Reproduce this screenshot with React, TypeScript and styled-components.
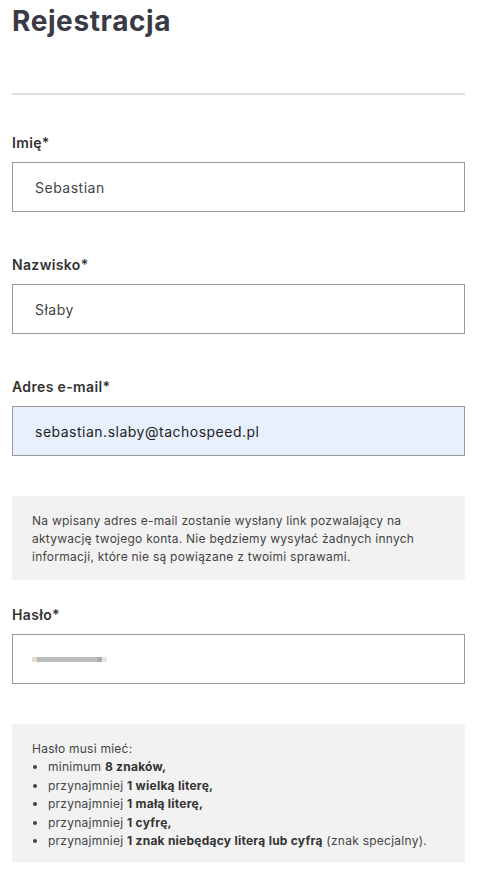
import React from 'react';
import styled, { createGlobalStyle } from 'styled-components';

const GlobalStyle = createGlobalStyle`
  * {
    box-sizing: border-box;
  }
  body {
    margin: 0;
    background: #fff;
    font-family: Inter, 'Noto Sans', sans-serif;
    color: #444;
  }
`;

const Page = styled.div`
  padding: 0 17px 0 12px;
`;

const Title = styled.h1`
  margin: 0;
  padding-top: 2px;
  font-size: 28px;
  line-height: 38px;
  font-weight: 700;
  letter-spacing: 0.6px;
  color: #3a3a45;
`;

const Divider = styled.hr`
  margin: 53px 0 0;
  border: none;
  height: 2px;
  background: #dedede;
`;

const Field = styled.div<{ $top: number }>`
  margin-top: ${({ $top }) => $top}px;
`;

const Label = styled.label`
  display: block;
  font-size: 14px;
  line-height: 20px;
  font-weight: 600;
  letter-spacing: 0.35px;
  color: #333;
  margin-bottom: 9px;
`;

const Input = styled.div<{ $autofill?: boolean }>`
  height: 50px;
  display: flex;
  align-items: center;
  padding: 0 22px;
  border: 1px solid #999;
  background: ${({ $autofill }) => ($autofill ? '#e8f0fe' : '#fff')};
  font-size: 14px;
  letter-spacing: 0.5px;
  color: ${({ $autofill }) => ($autofill ? '#222' : '#444')};
`;

const MaskedValue = styled.span`
  display: block;
  width: 75px;
  height: 5px;
  margin-left: -3px;
  background: linear-gradient(90deg, #e6dcd2 0 5px, #bbb 5px 65px, #aaa 65px 70px, #dde8ec 70px);
`;

const Note = styled.div<{ $top: number }>`
  margin-top: ${({ $top }) => $top}px;
  background: #f2f2f2;
  padding: 16px 20px 14px;
  font-size: 12px;
  line-height: 18px;
  letter-spacing: 0.25px;
  color: #444;
`;

const RulesNote = styled(Note)`
  padding-bottom: 11px;
`;

const RuleList = styled.ul`
  margin: 0;
  padding-left: 16px;
`;

const Rule = styled.li`
  line-height: 18.6px;
  b {
    font-weight: 700;
    color: #333;
  }
`;

export default function App() {
  return (
    <Page>
      <GlobalStyle />
      <Title>Rejestracja</Title>
      <Divider />
      <Field $top={38}>
        <Label>Imię*</Label>
        <Input>Sebastian</Input>
      </Field>
      <Field $top={43}>
        <Label>Nazwisko*</Label>
        <Input>Słaby</Input>
      </Field>
      <Field $top={43}>
        <Label>Adres e-mail*</Label>
        <Input $autofill>sebastian.slaby@tachospeed.pl</Input>
      </Field>
      <Note $top={40}>
        Na wpisany adres e-mail zostanie wysłany link pozwalający na aktywację twojego konta. Nie będziemy
        wysyłać żadnych innych informacji, które nie są powiązane z twoimi sprawami.
      </Note>
      <Field $top={25}>
        <Label>Hasło*</Label>
        <Input>
          <MaskedValue />
        </Input>
      </Field>
      <RulesNote $top={40}>
        <div>Hasło musi mieć:</div>
        <RuleList>
          <Rule>
            minimum <b>8 znaków,</b>
          </Rule>
          <Rule>
            przynajmniej <b>1 wielką literę,</b>
          </Rule>
          <Rule>
            przynajmniej <b>1 małą literę,</b>
          </Rule>
          <Rule>
            przynajmniej <b>1 cyfrę,</b>
          </Rule>
          <Rule>
            przynajmniej <b>1 znak niebędący literą lub cyfrą</b> (znak specjalny).
          </Rule>
        </RuleList>
      </RulesNote>
    </Page>
  );
}
